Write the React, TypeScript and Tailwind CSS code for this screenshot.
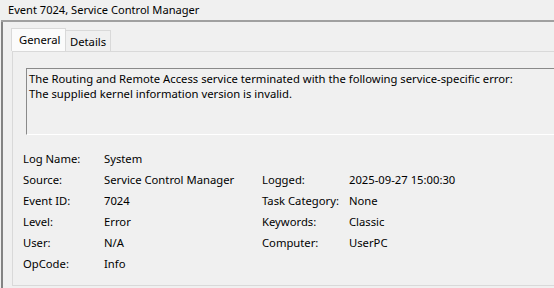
import React from "react";

const left = [
  ["Log Name:", "System"],
  ["Source:", "Service Control Manager"],
  ["Event ID:", "7024"],
  ["Level:", "Error"],
  ["User:", "N/A"],
  ["OpCode:", "Info"],
];

const right: (string[] | null)[] = [
  null,
  ["Logged:", "2025-09-27 15:00:30"],
  ["Task Category:", "None"],
  ["Keywords:", "Classic"],
  ["Computer:", "UserPC"],
  null,
];

export default function App() {
  return (
    <div
      className="w-[554px] h-[288px] bg-[#f0f0f0] text-black overflow-hidden flex flex-col text-[11.25px]"
      style={{ fontFamily: '"Noto Sans", "Segoe UI", sans-serif' }}
    >
      <div className="h-[20px] pl-[8px] pt-[2px] text-[11.1px] leading-[16px]">
        Event 7024, Service Control Manager
      </div>
      <div className="h-[2px] ml-[1px] bg-[#a0a0a0]" />
      <div className="flex-1 ml-[1px] border-l-2 border-[#838383] flex flex-col pl-[8px] pt-[7px]">
        <div className="flex h-[22px] items-end relative z-10">
          <div className="h-[23px] w-[55px] bg-[#fbfbfb] border border-b-0 border-[#d9d9d9] pl-[7px] pt-[4px] leading-[14px]">
            General
          </div>
          <div className="h-[21px] w-[45px] bg-[#f0f0f0] border border-l-0 border-b-0 border-[#d9d9d9] pl-[4px] pt-[4px] leading-[14px]">
            Details
          </div>
        </div>
        <div className="flex-1 ml-[1px] mb-[2px] border border-r-0 border-[#d9d9d9] bg-[#f0f0f0] flex flex-col pl-[13px] pt-[16px]">
          <div className="h-[67px] border-t border-l border-[#8a8a8a] border-b border-b-white pl-[2px] pt-[2px] leading-[15px]">
            <div>The Routing and Remote Access service terminated with the following service-specific error:</div>
            <div>The supplied kernel information version is invalid.</div>
          </div>
          <div className="mt-[14px] -ml-[3px] flex flex-col">
            {left.map((l, i) => (
              <div key={i} className="flex h-[21px] items-center">
                <div className="w-[81px]">{l[0]}</div>
                <div className="w-[158px]">{l[1]}</div>
                {right[i] ? (
                  <>
                    <div className="w-[87px]">{right[i]![0]}</div>
                    <div>{right[i]![1]}</div>
                  </>
                ) : null}
              </div>
            ))}
          </div>
        </div>
      </div>
    </div>
  );
}
